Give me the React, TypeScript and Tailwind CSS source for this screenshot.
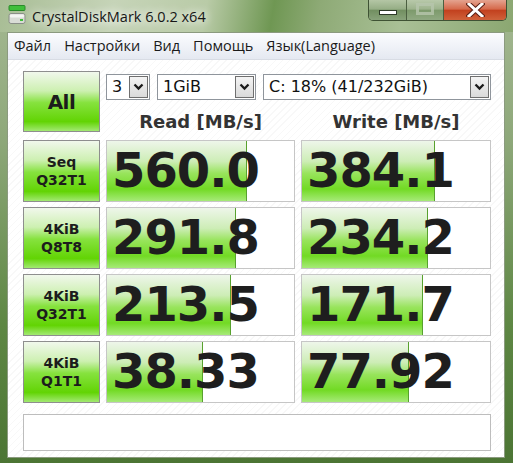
import React from "react";

type Row = {
  top: string;
  bottom: string;
  read: string;
  write: string;
  readFill: number;
  writeFill: number;
};

const rows: Row[] = [
  { top: "Seq", bottom: "Q32T1", read: "560.0", write: "384.1", readFill: 140, writeFill: 133 },
  { top: "4KiB", bottom: "Q8T8", read: "291.8", write: "234.2", readFill: 129, writeFill: 126 },
  { top: "4KiB", bottom: "Q32T1", read: "213.5", write: "171.7", readFill: 124, writeFill: 121 },
  { top: "4KiB", bottom: "Q1T1", read: "38.33", write: "77.92", readFill: 96, writeFill: 107 },
];

const menu = ["Файл", "Настройки", "Вид", "Помощь", "Язык(Language)"];

const greenBtn =
  "bg-[linear-gradient(to_bottom,#f1f8ec_0%,#cdf0b1_32%,#86e23e_52%,#62d404_84%,#a2e972_100%)]";

function DiskIcon() {
  return (
    <svg width="18" height="20" viewBox="0 0 18 20">
      <rect x="1" y="0.5" width="16" height="5" rx="1" fill="#3fbf3a" stroke="#2a8a2a" />
      <rect x="1" y="8.5" width="16" height="10" rx="2" fill="#d9dcd6" stroke="#8a8f88" />
      <rect x="2" y="9.5" width="14" height="3" rx="1" fill="#f4f5f3" />
      <rect x="12" y="14" width="3" height="2" fill="#3fbf3a" />
    </svg>
  );
}

function Chevron() {
  return (
    <svg width="11" height="8" viewBox="0 0 11 8">
      <path d="M1.5 1.5 L5.5 5.5 L9.5 1.5" fill="none" stroke="#1b1b1b" strokeWidth="2.3" />
    </svg>
  );
}

function Combo({ value, className }: { value: string; className: string }) {
  return (
    <div
      className={`flex h-[26px] items-center border border-[#8f959c] bg-white pl-[5px] pr-[1px] text-[16px] text-[#111] ${className}`}
    >
      <span className="flex-1">{value}</span>
      <div className="flex h-[22px] w-[19px] items-center justify-center border border-[#6f6f6f] bg-[linear-gradient(to_bottom,#f4f4f4,#dadada)]">
        <Chevron />
      </div>
    </div>
  );
}

function ValueBox({ value, fill }: { value: string; fill: number }) {
  return (
    <div className="relative flex h-full items-center overflow-hidden border border-[#c6c6c6] bg-white pb-[3px] pl-[5px]">
      <div
        className="absolute inset-y-0 left-0 border-r border-[#58a12e] bg-[linear-gradient(to_bottom,#eef6ea_0%,#cdedb6_34%,#98e45c_54%,#72da24_80%,#a6ea78_100%)]"
        style={{ width: fill }}
      />
      <span className="relative text-[48px] font-bold leading-none tracking-[-1px] text-[#1e1e1e]">
        {value}
      </span>
    </div>
  );
}

export default function App() {
  return (
    <div className="flex h-[463px] w-[513px] flex-col overflow-hidden bg-[linear-gradient(to_bottom,#a4b892_0%,#8ea87a_30%,#5e8744_70%,#4c7534_100%)] font-['DejaVu_Sans',sans-serif]">
      {/* title bar */}
      <div className="flex h-[32px] shrink-0 items-start bg-[linear-gradient(100deg,#a8bd95_0%,#c6d4b8_22%,#b9cba7_40%,#6f9753_53%,#8eaa76_62%,#a9c096_78%,#8ba771_100%)]">
        <div className="ml-[8px] mt-[5px]">
          <DiskIcon />
        </div>
        <span className="ml-[6px] mt-[6px] font-['Open_Sans',sans-serif] text-[14.5px] text-[#161616] [text-shadow:0_0_8px_#fff,0_0_12px_#fff]">
          CrystalDiskMark 6.0.2 x64
        </span>
        <div className="ml-auto mr-[6px] flex h-[21px] overflow-hidden rounded-b-[5px] border border-t-0 border-[#3f5234]">
          <div className="flex w-[38px] items-center justify-center border-r border-[#4b5f40] bg-[linear-gradient(to_bottom,#b4c6a5_0%,#96ae86_45%,#728f61_52%,#88a27a_100%)]">
            <div className="mt-[4px] h-[5px] w-[18px] border border-[#2d3a28] bg-white" />
          </div>
          <div className="flex w-[37px] items-center justify-center border-r border-[#4b5f40] bg-[linear-gradient(to_bottom,#b8c9aa_0%,#9db38d_45%,#7d9a6c_52%,#90a982_100%)]">
            <div className="mb-[2px] h-[12px] w-[18px] border-[3px] border-[#b7c6ad]/80 bg-transparent" />
          </div>
          <div className="flex w-[62px] items-center justify-center bg-[linear-gradient(to_bottom,#e4a38f_0%,#d66a4c_45%,#c2411f_52%,#d0613a_100%)]">
            <svg width="19" height="14" viewBox="0 0 19 14">
              <path
                d="M3 1 L16 13 M16 1 L3 13"
                stroke="#5a2016"
                strokeWidth="5"
                strokeLinecap="square"
              />
              <path
                d="M3 1 L16 13 M16 1 L3 13"
                stroke="#fff"
                strokeWidth="3"
                strokeLinecap="square"
              />
            </svg>
          </div>
        </div>
      </div>

      {/* client area */}
      <div className="ml-[7px] mr-[8px] flex h-[426px] flex-col border border-[#8b9a7f]">
        <div className="flex h-[27px] shrink-0 items-center gap-[13px] border-b border-[#d8dce4] bg-[linear-gradient(to_bottom,#fbfcfe,#e5e9f1)] pl-[6px] font-['Open_Sans',sans-serif] text-[14.5px] text-[#1a1a1a]">
          {menu.map((item) => (
            <span key={item}>{item}</span>
          ))}
        </div>

        <div className="flex flex-1 flex-col bg-[repeating-linear-gradient(135deg,#ffffff_0px,#ffffff_4px,#f8f8f8_4px,#f8f8f8_5px)] pl-[15px] pt-[11px]">
          <div className="grid h-[61px] grid-cols-[77px_189px_190px] gap-x-[6px]">
            <div
              className={`flex h-[61px] items-center justify-center border border-[#8e8e8e] ${greenBtn}`}
            >
              <span className="text-[20px] font-bold tracking-[-0.5px] text-[#1c1c1c]">All</span>
            </div>
            <div className="col-span-2 flex h-[61px] flex-col">
              <div className="mt-[3px] flex gap-[7px]">
                <Combo value="3" className="w-[44px]" />
                <Combo value="1GiB" className="w-[99px]" />
                <Combo value="C: 18% (41/232GiB)" className="w-[228px]" />
              </div>
              <div className="grid flex-1 grid-cols-[189px_190px] gap-x-[6px] pt-[12px] text-[18px] font-bold leading-none text-[#333]">
                <div className="flex items-center justify-center">Read [MB/s]</div>
                <div className="flex items-center justify-center">Write [MB/s]</div>
              </div>
            </div>
          </div>

          <div className="mt-[8px] flex flex-col gap-[5px]">
            {rows.map((row) => (
              <div key={row.read} className="grid h-[62px] grid-cols-[77px_189px_190px] gap-x-[6px]">
                <div
                  className={`flex flex-col items-center justify-center border border-[#8e8e8e] text-[14px] font-bold leading-[18px] text-[#1c1c1c] ${greenBtn}`}
                >
                  <span>{row.top}</span>
                  <span>{row.bottom}</span>
                </div>
                <ValueBox value={row.read} fill={row.readFill} />
                <ValueBox value={row.write} fill={row.writeFill} />
              </div>
            ))}
          </div>

          <div className="mt-[11px] h-[37px] w-[468px] border border-[#bdbdbd] bg-white" />
        </div>
      </div>
    </div>
  );
}
